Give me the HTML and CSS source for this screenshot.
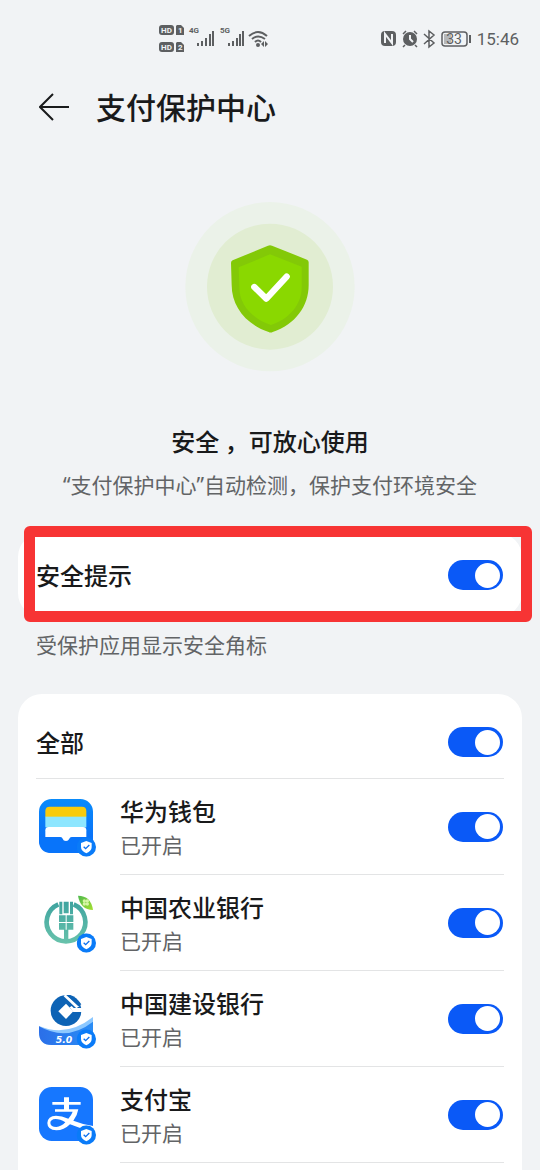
FILE: index.html
```html
<!DOCTYPE html>
<html lang="zh-CN">
<head>
<meta charset="utf-8">
<meta name="viewport" content="width=device-width, initial-scale=1">
<title>支付保护中心</title>
<link rel="stylesheet" href="styles.css">
</head>
<body>
<svg class="defs" width="0" height="0" aria-hidden="true">
  <defs>
    <linearGradient id="wallet" x1="0" y1="0" x2="0" y2="1"><stop offset="0" stop-color="#0a8bfa"/><stop offset="1" stop-color="#0868f8"/></linearGradient>
    <linearGradient id="teal" gradientUnits="userSpaceOnUse" x1="81" y1="18" x2="81" y2="148"><stop offset="0" stop-color="#3ea39f"/><stop offset="1" stop-color="#69c3ac"/></linearGradient>
    <linearGradient id="leaf" x1="0" y1="0" x2="1" y2="1"><stop offset="0" stop-color="#4fb94f"/><stop offset="1" stop-color="#a4e030"/></linearGradient>
    <linearGradient id="wave" x1="0" y1="0" x2="1" y2="0"><stop offset="0" stop-color="#2b6fe8"/><stop offset="1" stop-color="#2a8cf5"/></linearGradient>
    <symbol id="badge" viewBox="0 0 58 58">
      <circle cx="29" cy="29" r="29" fill="#0a7bf8"/>
      <path d="M29 11 45 17V29Q45 41 29 48Q13 41 13 29V17Z" fill="#fff"/>
      <path d="M21 28 27 34 38 23" fill="none" stroke="#0a6ff0" stroke-width="4"/>
    </symbol>
  </defs>
</svg>
<div class="screen">
  <div class="status">
    <svg class="status-left" viewBox="0 0 110 28" role="img" aria-label="信号">
      <g fill="#5d5f61">
        <rect x="0" y="0" width="15" height="10" rx="3"/>
        <path d="M18 0h4l3 3v7h-8V1z"/>
        <rect x="0" y="17" width="15" height="10" rx="3"/>
        <path d="M18 17h4l3 3v7h-8v-9z"/>
        <rect x="38" y="18" width="2" height="3"/><rect x="42" y="16" width="2" height="5"/><rect x="46" y="13" width="2" height="8"/><rect x="50" y="9" width="2" height="12"/><rect x="53" y="6" width="2" height="15"/>
        <rect x="69" y="18" width="2" height="3"/><rect x="73" y="16" width="2" height="5"/><rect x="77" y="13" width="2" height="8"/><rect x="80" y="9" width="2" height="12"/><rect x="83" y="6" width="2" height="15"/>
        <circle cx="99" cy="20" r="2"/>
        <path d="M105 16v6l-3-3zM106 16v6l3-3z"/>
      </g>
      <g fill="none" stroke="#5d5f61" stroke-width="2">
        <path d="M90 11Q99 3 108 11"/><path d="M93 14Q99 9 106 14"/><path d="M96 17Q99 14 102 17"/>
      </g>
      <g class="hd"><text x="2" y="8">HD</text><text x="19" y="8">1</text><text x="2" y="25">HD</text><text x="19" y="25">2</text></g>
      <g class="net"><text x="30" y="8">4G</text><text x="61" y="8">5G</text></g>
    </svg>
    <div class="status-right">
      <svg class="status-icons" viewBox="0 0 90 20" role="img" aria-label="电量 33">
        <rect x="0" y="2" width="15" height="15" rx="4" fill="#5d5f61"/>
        <path d="M4 14V5L11 14V5" fill="none" stroke="#f1f3f5" stroke-width="2"/>
        <circle cx="29" cy="10" r="7" fill="#5d5f61"/>
        <path d="M29 6V10L32 13" fill="none" stroke="#f1f3f5" stroke-width="2"/>
        <path d="M22 5 25 2M33 2 36 5M24 16 22 18M34 16 36 18M43 5 53 14 48 18V2L53 6 43 15" fill="none" stroke="#5d5f61" stroke-width="1.5"/>
        <rect x="61" y="3" width="25" height="14" rx="3" fill="none" stroke="#5d5f61" stroke-width="1.5"/>
        <rect x="63" y="5" width="7" height="10" fill="#b5b7b9"/>
        <rect x="88" y="6" width="2" height="8" fill="#5d5f61"/>
        <text class="battery" x="73" y="15">33</text>
      </svg>
      <span class="time">15:46</span>
    </div>
  </div>

  <header class="header">
    <button class="back" type="button" aria-label="返回">
      <svg viewBox="0 0 30 28"><path d="M14 1 1 14 14 27M1 14H30" fill="none" stroke="#1a1b1c" stroke-width="2"/></svg>
    </button>
    <h1 class="title">支付保护中心</h1>
  </header>

  <main class="content">
    <section class="hero">
      <svg class="shield" viewBox="31 36 510 510" aria-hidden="true">
        <circle cx="286" cy="290" r="254" fill="#ebf2e9"/>
        <circle cx="286" cy="290" r="189" fill="#e1edd2"/>
        <path d="M280 167Q286 164 292 167L397 209Q402 211 402 217V285C402 348 362 404 294 426Q288 429 282 426C212 402 171 348 171 285L169 219Q169 213 174 211Z" fill="#83c907"/>
        <path d="M286 193 381 230V293C381 342 345 386 289 405C231 386 194 342 194 293L192 232Z" fill="#8ad800"/>
        <path d="M239 291 275 326 336 260" fill="none" stroke="#fff" stroke-width="19" stroke-linecap="round" stroke-linejoin="round"/>
      </svg>
      <h2 class="headline">安全 ，可放心使用</h2>
      <p class="summary">“支付保护中心”自动检测，保护支付环境安全</p>
    </section>

    <section class="card tip-card">
      <div class="row">
        <label class="name" for="tip">安全提示</label>
        <input class="switch" id="tip" type="checkbox" role="switch" checked>
      </div>
      <span class="highlight"></span>
    </section>
    <p class="note">受保护应用显示安全角标</p>

    <section class="card app-card">
      <div class="row all-row">
        <label class="name" for="all">全部</label>
        <input class="switch" id="all" type="checkbox" role="switch" checked>
      </div>
      <div class="app">
        <svg class="app-icon" viewBox="0 0 174 174" aria-hidden="true">
          <rect width="162" height="162" rx="38" fill="url(#wallet)"/>
          <path d="M19 36Q19 23 32 23H129Q142 23 142 36V54H19Z" fill="#f8cb0c"/>
          <rect x="19" y="53" width="123" height="32" fill="#8de6ff"/>
          <path d="M19 94Q19 84 29 84H132Q142 84 142 94V115H19Z" fill="#fff"/>
          <path d="M0 114H162V124Q162 162 124 162H38Q0 162 0 124Z" fill="#0874fa"/>
          <path d="M64 114H98Q92 114 91 119Q88 126 81 126Q73 126 71 119Q70 114 64 114Z" fill="#fff"/>
          <use href="#badge" x="113" y="115" width="58" height="58"/>
        </svg>
        <div class="app-body">
          <label class="app-text" for="app1"><span class="name">华为钱包</span><span class="state">已开启</span></label>
          <input class="switch" id="app1" type="checkbox" role="switch" checked>
        </div>
      </div>
      <div class="app">
        <svg class="app-icon" viewBox="0 0 174 174" aria-hidden="true">
          <path d="M58 28A58 58 0 1 0 104 28" fill="none" stroke="url(#teal)" stroke-width="14"/>
          <path d="M61 20H70V58H61ZM74 20H89V55H74ZM93 20H102V58H93ZM60 61H80V81H60ZM83 61H103V81H83ZM60 84H80V104H60ZM83 84H103V104H83ZM75 104H88V143H75Z" fill="url(#teal)"/>
          <path d="M117 2Q156 2 162 45Q124 44 117 2Z" fill="url(#leaf)"/>
          <g fill="#d5f5a5"><circle cx="136" cy="18" r="5"/><circle cx="145" cy="18" r="5"/><circle cx="136" cy="27" r="5"/><circle cx="145" cy="27" r="5"/></g>
          <use href="#badge" x="113" y="115" width="58" height="58"/>
        </svg>
        <div class="app-body">
          <label class="app-text" for="app2"><span class="name">中国农业银行</span><span class="state">已开启</span></label>
          <input class="switch" id="app2" type="checkbox" role="switch" checked>
        </div>
      </div>
      <div class="app">
        <svg class="app-icon" viewBox="0 0 174 174" aria-hidden="true">
          <path d="M0 105Q84 140 162 78V124Q162 162 124 162H38Q0 162 0 124Z" fill="#8cc8ff"/>
          <path d="M0 106Q84 153 162 92V124Q162 162 124 162H38Q0 162 0 124Z" fill="url(#wave)"/>
          <circle cx="81" cy="59" r="46" fill="#0d63b5"/>
          <path d="M81 38 103 61 81 84 58 61Z" fill="#fff"/>
          <path d="M98 45 104 51H130V63H103L92 49Z" fill="#fff"/>
          <path d="M74 16 80 10 121 46 112 52Z" fill="#fff"/>
          <path d="M82 12H94Q112 18 127 40L118 46Z" fill="#0d63b5"/>
          <text class="version" x="50" y="155">5.0</text>
          <use href="#badge" x="113" y="115" width="58" height="58"/>
        </svg>
        <div class="app-body">
          <label class="app-text" for="app3"><span class="name">中国建设银行</span><span class="state">已开启</span></label>
          <input class="switch" id="app3" type="checkbox" role="switch" checked>
        </div>
      </div>
      <div class="app">
        <svg class="app-icon" viewBox="0 0 174 174" aria-hidden="true">
          <rect width="162" height="162" rx="38" fill="#1677ff"/>
          <path d="M75 31H90V45H125V53H90V67H118Q115 86 103 101Q128 111 162 117V135Q125 125 93 112Q75 130 52 130Q25 129 25 108Q26 87 51 86Q68 86 88 95Q97 85 101 74H48V67H75V53H40V45H75ZM79 106Q63 96 50 96Q34 97 34 108Q35 120 52 120Q67 119 79 106Z" fill="#fff" fill-rule="evenodd"/>
          <use href="#badge" x="113" y="115" width="58" height="58"/>
        </svg>
        <div class="app-body">
          <label class="app-text" for="app4"><span class="name">支付宝</span><span class="state">已开启</span></label>
          <input class="switch" id="app4" type="checkbox" role="switch" checked>
        </div>
      </div>
    </section>
  </main>
</div>
</body>
</html>
```
FILE: styles.css
```css
* {
  box-sizing: border-box;
}

body {
  margin: 0;
  background: #f1f3f5;
  color: #191a1b;
  font-family: "Noto Sans CJK SC", sans-serif;
}

h1, h2, p {
  margin: 0;
}

svg {
  display: block;
}

.defs {
  position: absolute;
}

.screen {
  display: flex;
  flex-direction: column;
  min-height: 100vh;
}

.status {
  display: flex;
  align-items: center;
  justify-content: space-between;
  height: 78px;
  padding: 0 21px 0 159px;
}

.status-left {
  width: 110px;
  height: 28px;
}

.status-right {
  display: flex;
  align-items: center;
  gap: 6px;
}

.status-icons {
  width: 90px;
  height: 20px;
}

.hd {
  fill: #f1f3f5;
  font: bold 8px Roboto, sans-serif;
}

.net {
  fill: #5d5f61;
  font: bold 8px Roboto, sans-serif;
}

.battery {
  fill: #5d5f61;
  font: 14px Roboto, sans-serif;
  text-anchor: middle;
}

.time {
  color: #5d5f61;
  font: 17px/24px Roboto, sans-serif;
}

.header {
  display: flex;
  align-items: center;
  gap: 27px;
  height: 58px;
  padding: 0 39px;
}

.back {
  width: 30px;
  height: 28px;
  padding: 0;
  border: 0;
  background: none;
}

.title {
  padding-bottom: 2px;
  font-size: 30px;
  font-weight: 500;
  line-height: 44px;
}

.content {
  display: flex;
  flex: 1;
  flex-direction: column;
  padding: 0 18px;
}

.hero {
  display: flex;
  flex-direction: column;
  align-items: center;
  padding: 66px 0 32px;
  text-align: center;
}

.shield {
  width: 170px;
  height: 170px;
}

.headline {
  margin-top: 52px;
  font-size: 24px;
  font-weight: 500;
  line-height: 34px;
}

.summary {
  margin-top: 11px;
  color: #626466;
  font-family: "Noto Sans", "Noto Sans CJK SC", sans-serif;
  font-size: 21px;
  line-height: 32px;
}

.card {
  padding: 0 18px;
  border-radius: 24px;
  background: #fff;
}

.tip-card {
  position: relative;
  padding-top: 6px;
  padding-bottom: 6px;
}

.highlight {
  position: absolute;
  inset: -7px -10px -5px 6px;
  border: 11px solid #f73434;
  border-radius: 6px;
  pointer-events: none;
}

.row {
  display: flex;
  align-items: center;
  justify-content: space-between;
  height: 72px;
}

.name {
  font-size: 24px;
  font-weight: 500;
  line-height: 34px;
}

.note {
  padding: 11px 18px 34px;
  color: #626466;
  font-size: 21px;
  line-height: 32px;
}

.app-card {
  flex: 1;
  padding-top: 12px;
  border-radius: 24px 24px 0 0;
}

.all-row {
  height: 73px;
  border-bottom: 1px solid #e3e4e5;
}

.app {
  display: flex;
  height: 96px;
  padding-left: 3px;
}

.app-icon {
  flex: none;
  width: 58px;
  height: 58px;
  margin: 20px 23px 0 0;
}

.app-body {
  display: flex;
  flex: 1;
  align-items: center;
  justify-content: space-between;
  border-bottom: 1px solid #e3e4e5;
}

.app-text {
  display: flex;
  flex-direction: column;
}

.state {
  color: #626466;
  font-size: 21px;
  line-height: 32px;
}

.version {
  fill: #fff;
  font: italic bold 28px "DejaVu Sans", sans-serif;
}

.switch {
  flex: none;
  width: 55px;
  height: 30px;
  margin: 0 1px 0 0;
  padding: 0 3px;
  border-radius: 15px;
  appearance: none;
  background: #c9cbcd;
  display: flex;
  align-items: center;
}

.switch::before {
  width: 25px;
  height: 25px;
  border-radius: 50%;
  background: #fff;
  content: "";
}

.switch:checked {
  justify-content: flex-end;
  background: #0a59f7;
}
```
